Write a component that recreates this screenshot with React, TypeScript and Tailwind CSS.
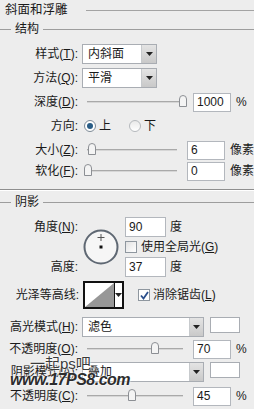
import React from 'react';

const Label: React.FC<{ children: React.ReactNode; w?: string }> = ({ children, w = 'w-[78px]' }) => (
  <span className={`${w} shrink-0 text-right whitespace-nowrap`}>{children}</span>
);

const Arrow = () => (
  <svg width="7" height="4" viewBox="0 0 7 4"><path d="M0 0h7L3.5 4z" fill="#222" /></svg>
);

const Select: React.FC<{ value: string; w: string; btn: string }> = ({ value, w, btn }) => (
  <div className={`${w} h-[20px] flex border border-[#a9adb3] bg-white`}>
    <span className="flex-1 pl-[5px] leading-[18px]">{value}</span>
    <span className={`${btn} flex items-center justify-center border-l border-[#c7cacd] bg-gradient-to-b from-[#e4e4e4] to-[#c9c9c9]`}>
      <Arrow />
    </span>
  </div>
);

const Input: React.FC<{ value: string; w?: string; h?: string }> = ({ value, w = 'w-[38px]', h = 'h-[19px]' }) => (
  <div className={`${w} ${h} border border-[#b3b7bd] bg-white pl-[3px] flex items-center text-[12px] font-['Liberation_Sans',sans-serif]`}>
    {value}
  </div>
);

const Thumb = () => (
  <svg width="8" height="12" viewBox="0 0 8 12">
    <path d="M0.5 11.5V4Q0.5 0.5 4 0.5Q7.5 0.5 7.5 4V11.5Z" fill="#f4f4f4" stroke="#8c8f94" />
  </svg>
);

const Slider: React.FC<{ pos: number }> = ({ pos }) => (
  <div className="relative ml-[9px] w-[96px] h-[20px] flex items-center">
    <div className="w-full h-[2px] bg-[#d6d6d6] border-t border-[#a9a9a9]" />
    <div className="absolute top-[3px]" style={{ left: pos - 4 }}>
      <Thumb />
    </div>
  </div>
);

const SliderRow: React.FC<{ label: React.ReactNode; pos: number; value: string; unit: string; mt: string }> = ({ label, pos, value, unit, mt }) => (
  <div className={`flex items-center h-[20px] ${mt}`}>
    <Label>{label}</Label>
    <Slider pos={pos} />
    <div className="ml-[10px]"><Input value={value} /></div>
    <span className="ml-[5px] whitespace-nowrap">{unit}</span>
  </div>
);

const Legend: React.FC<{ text: string }> = ({ text }) => (
  <div className="flex items-center h-[18px]">
    <div className="w-[11px] h-px bg-[#9d9d9d]" />
    <span className="px-[4px]">{text}</span>
    <div className="flex-1 h-px bg-[#9d9d9d]" />
  </div>
);

const Swatch = () => <div className="w-[30px] h-[16px] border border-[#a9adb3] bg-white" />;

export default function App() {
  return (
    <div className="relative w-[254px] h-[409px] overflow-hidden bg-[#ededed] text-[12px] text-[#1a1a1a] font-['Liberation_Sans','Noto_Sans_CJK_SC',sans-serif] leading-none">
      {/* title */}
      <div className="flex items-center h-[20px] pl-[5px]">
        <span className="text-[12.5px]">斜面和浮雕</span>
        <div className="flex-1 ml-[18px] h-px bg-[#a3a3a3]" />
      </div>
      <Legend text="结构" />

      <div className="flex items-center h-[20px] mt-[6px]">
        <Label>样式(<u>T</u>):</Label>
        <div className="ml-[4px]"><Select value="内斜面" w="w-[75px]" btn="w-[15px]" /></div>
      </div>
      <div className="flex items-center h-[20px] mt-[4px]">
        <Label>方法(<u>Q</u>):</Label>
        <div className="ml-[4px]"><Select value="平滑" w="w-[75px]" btn="w-[15px]" /></div>
      </div>
      <SliderRow label={<>深度(<u>D</u>):</>} pos={96} value="1000" unit="%" mt="mt-[4px]" />

      <div className="flex items-center h-[20px] mt-[4px]">
        <Label>方向:</Label>
        <span className="ml-[6px] w-[12px] h-[12px] rounded-full border border-[#7d8a96] bg-white flex items-center justify-center">
          <span className="w-[6px] h-[6px] rounded-full bg-[#2a5d86]" />
        </span>
        <span className="ml-[3px]">上</span>
        <span className="ml-[18px] w-[12px] h-[12px] rounded-full border border-[#b5b9bd] bg-gradient-to-b from-[#e9e9e9] to-white" />
        <span className="ml-[3px]">下</span>
      </div>

      <SliderRow label={<>大小(<u>Z</u>):</>} pos={5} value="6" unit="像素" mt="mt-[4px]" />
      <SliderRow label={<>软化(<u>F</u>):</>} pos={1} value="0" unit="像素" mt="mt-[1px]" />

      <div className="mt-[8px] h-px bg-[#8e8e8e] border-b border-white box-content" />

      <div className="mt-[2px]"><Legend text="阴影" /></div>

      <div className="grid grid-cols-[78px_47px_1fr] grid-rows-[20px_16px_20px] gap-y-[2px] mt-[6px]">
        <div className="flex items-center justify-end">角度(<u>N</u>):</div>
        <div className="row-span-3 flex items-center pl-[5px]">
          <svg width="36" height="36" viewBox="0 0 36 36">
            <circle cx="18" cy="18" r="16.5" fill="#f6f6f6" stroke="#5f6873" strokeWidth="2" />
            <path d="M18 5v7M14.5 8.5h7" stroke="#555" strokeWidth="1" />
            <rect x="16.5" y="16.5" width="3" height="3" fill="#111" />
          </svg>
        </div>
        <div className="flex items-center">
          <Input value="90" w="w-[41px]" h="h-[20px]" />
          <span className="ml-[4px]">度</span>
        </div>
        <div />
        <div className="flex items-center">
          <span className="w-[12px] h-[12px] border border-[#8f979f] bg-gradient-to-br from-[#e2e2e2] to-white" />
          <span className="ml-[4px] whitespace-nowrap">使用全局光(<u>G</u>)</span>
        </div>
        <div className="flex items-center justify-end">高度:</div>
        <div className="flex items-center">
          <Input value="37" w="w-[41px]" h="h-[20px]" />
          <span className="ml-[4px]">度</span>
        </div>
      </div>

      <div className="flex items-center h-[28px] mt-[4px]">
        <Label w="w-[79px]">光泽等高线:</Label>
        <div className="ml-[4px] flex h-[28px] w-[41px] border-2 border-[#111] bg-white">
          <svg width="29" height="24" viewBox="0 0 29 24" className="shrink-0">
            <path d="M0 24L29 0V24Z" fill="#979797" />
          </svg>
          <span className="flex-1 border-l border-[#111] flex items-center justify-center"><Arrow /></span>
        </div>
        <span className="ml-[14px] w-[12px] h-[12px] border border-[#8f979f] bg-white flex items-center justify-center">
          <svg width="9" height="9" viewBox="0 0 9 9"><path d="M1 4.5L3.5 7.5L8 1" stroke="#2b4f8c" strokeWidth="1.8" fill="none" /></svg>
        </span>
        <span className="ml-[3px] whitespace-nowrap">消除锯齿(<u>L</u>)</span>
      </div>

      <div className="flex items-center h-[20px] mt-[8px]">
        <Label>高光模式(<u>H</u>):</Label>
        <div className="ml-[4px]"><Select value="滤色" w="w-[122px]" btn="w-[14px]" /></div>
        <div className="ml-[6px] -mt-[4px]"><Swatch /></div>
      </div>
      <SliderRow label={<>不透明度(<u>O</u>):</>} pos={68} value="70" unit="%" mt="mt-[2px]" />

      <div className="flex items-center h-[20px] mt-[3px]">
        <Label>阴影模式(<u>A</u>):</Label>
        <div className="ml-[4px]"><Select value="叠加" w="w-[122px]" btn="w-[14px]" /></div>
        <div className="ml-[6px] -mt-[4px]"><Swatch /></div>
      </div>
      <SliderRow label={<>不透明度(<u>C</u>):</>} pos={45} value="45" unit="%" mt="mt-[4px]" />

      {/* watermark */}
      <div className="absolute left-[30px] top-[356px] text-[15px] text-[#3a3a3a] [text-shadow:0_0_2px_#fff,0_0_2px_#fff]">
        一起ps吧
      </div>
      <div className="absolute left-[10px] top-[372px] text-[16px] font-bold italic tracking-[-0.5px] text-[#2d2d2d] [text-shadow:0_0_2px_#fff,0_0_2px_#fff]">
        www.17PS8.com
      </div>
    </div>
  );
}
